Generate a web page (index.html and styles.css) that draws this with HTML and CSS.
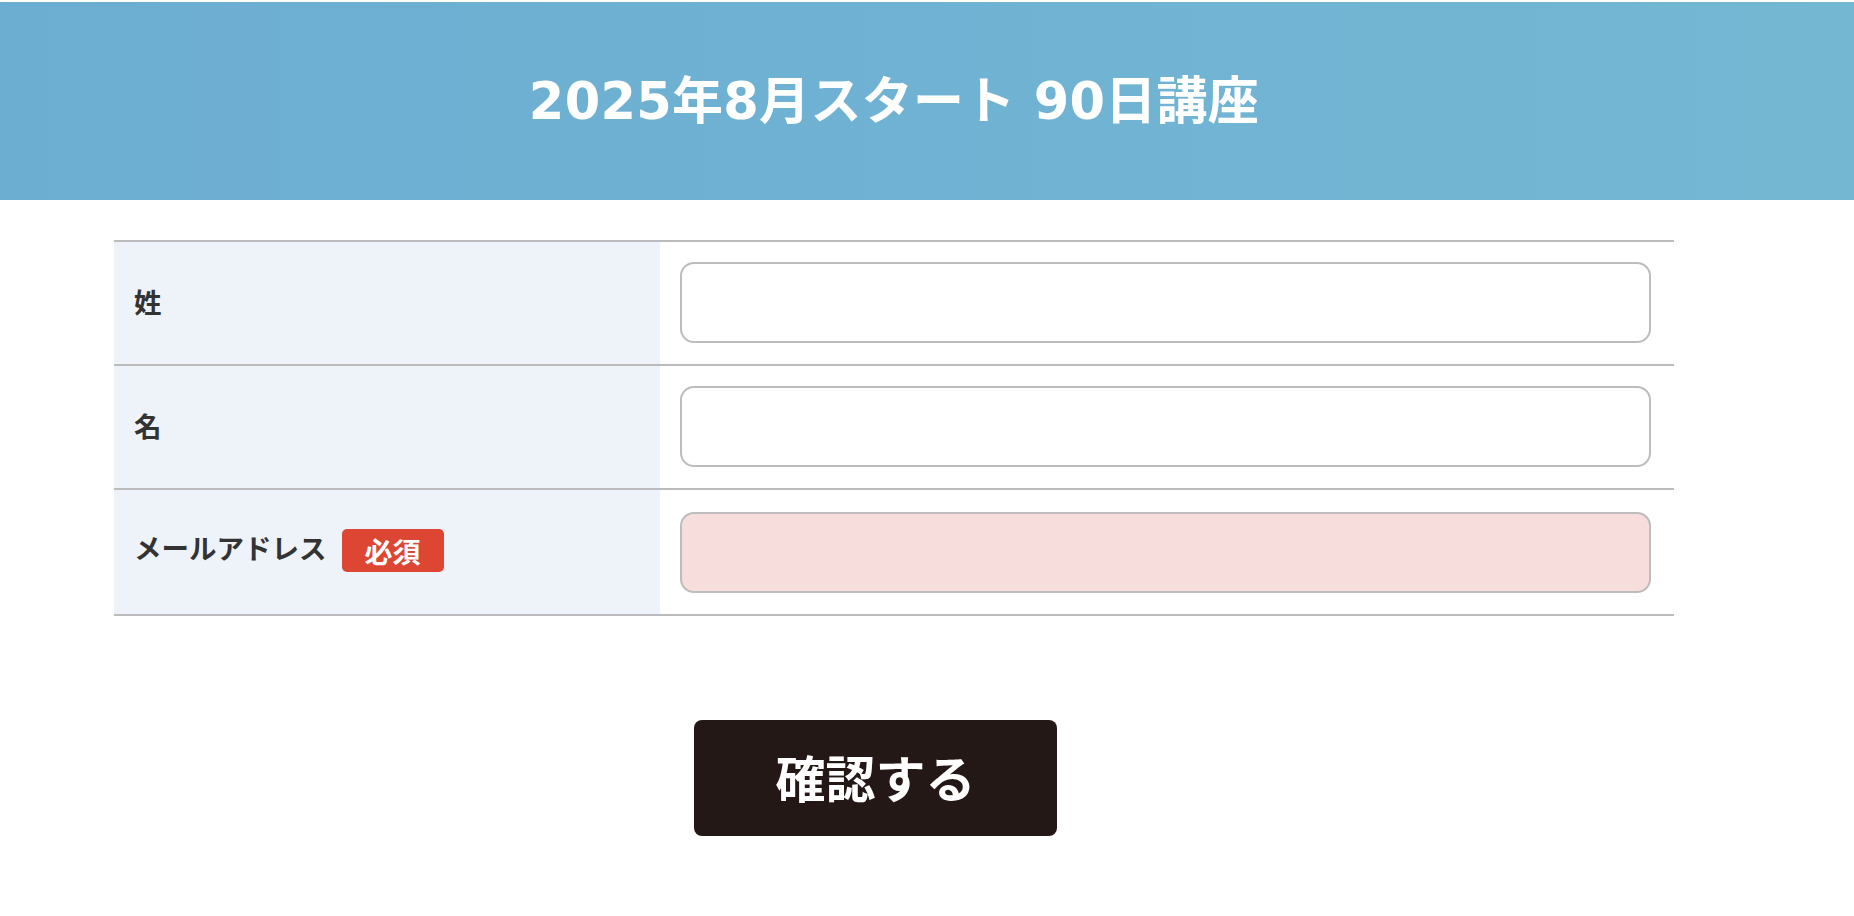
FILE: index.html
```html
<!DOCTYPE html>
<html lang="ja">
<head>
<meta charset="utf-8">
<title>2025年8月スタート 90日講座</title>
<link rel="stylesheet" href="styles.css">
</head>
<body>
  <header class="hero">
    <h1 class="hero-title">2025年8月スタート 90日講座</h1>
  </header>
  <main class="content">
    <form class="form">
      <table class="form-table">
        <tr class="form-row">
          <th class="form-label">姓</th>
          <td class="form-field"><input class="text-input" type="text"></td>
        </tr>
        <tr class="form-row">
          <th class="form-label">名</th>
          <td class="form-field"><input class="text-input" type="text"></td>
        </tr>
        <tr class="form-row form-row-last">
          <th class="form-label">メールアドレス<span class="badge">必須</span></th>
          <td class="form-field"><input class="text-input text-input-required" type="email"></td>
        </tr>
      </table>
      <div class="actions">
        <button class="submit" type="button">確認する</button>
      </div>
    </form>
  </main>
</body>
</html>
```

FILE: styles.css
```css
html, body {
  margin: 0;
  padding: 0;
  background: #ffffff;
}

body {
  padding-top: 2px;
  font-family: "Noto Sans CJK JP", "Noto Sans", sans-serif;
  color: #333333;
}

.hero {
  height: 198px;
  background: linear-gradient(to right, #6cadd2, #73b7d3);
  display: flex;
  align-items: center;
  justify-content: center;
  padding: 0 180px 0 114px;
}

.hero-title {
  margin: 0;
  font-family: "DejaVu Sans", "Noto Sans CJK JP", sans-serif;
  font-size: 51px;
  font-weight: 700;
  color: #ffffff;
  line-height: 1;
  letter-spacing: 0.3px;
}

.content {
  padding: 40px 180px 0 114px;
}

.form-table {
  width: 100%;
  border-collapse: collapse;
  border-top: 2px solid #bcbcbc;
}

.form-row {
  border-bottom: 2px solid #bcbcbc;
}

.form-label {
  width: 546px;
  box-sizing: border-box;
  padding: 0 20px 4px 20px;
  background: #eef3fa;
  text-align: left;
  vertical-align: middle;
  font-size: 27.5px;
  font-weight: 700;
  color: #333333;
  white-space: nowrap;
}

.badge {
  display: inline-flex;
  align-items: center;
  justify-content: center;
  height: 43px;
  padding: 0 23px;
  margin-left: 15px;
  vertical-align: middle;
  background: #dc4632;
  border-radius: 5px;
  color: #ffffff;
  font-size: 28px;
  font-weight: 700;
  line-height: 1;
  position: relative;
  top: -1px;
}

.form-field {
  padding: 20px 23px 21px 20px;
  vertical-align: middle;
}

.form-row-last .form-field {
  padding-top: 22px;
}

.text-input {
  display: block;
  width: 100%;
  height: 81px;
  box-sizing: border-box;
  border: 2px solid #bdbdbd;
  border-radius: 14px;
  background: #ffffff;
  font-family: inherit;
  font-size: 24px;
  padding: 0 18px;
  outline: none;
}

.text-input-required {
  background: #f8dddd;
}

.actions {
  display: flex;
  justify-content: center;
  padding: 104px 37px 0 0;
}

.submit {
  width: 363px;
  height: 116px;
  border: none;
  border-radius: 8px;
  background: #231815;
  color: #ffffff;
  font-family: "Noto Sans CJK JP", sans-serif;
  font-size: 50px;
  font-weight: 700;
  line-height: 1;
  cursor: pointer;
  padding: 0 0 4px 0;
}
```
